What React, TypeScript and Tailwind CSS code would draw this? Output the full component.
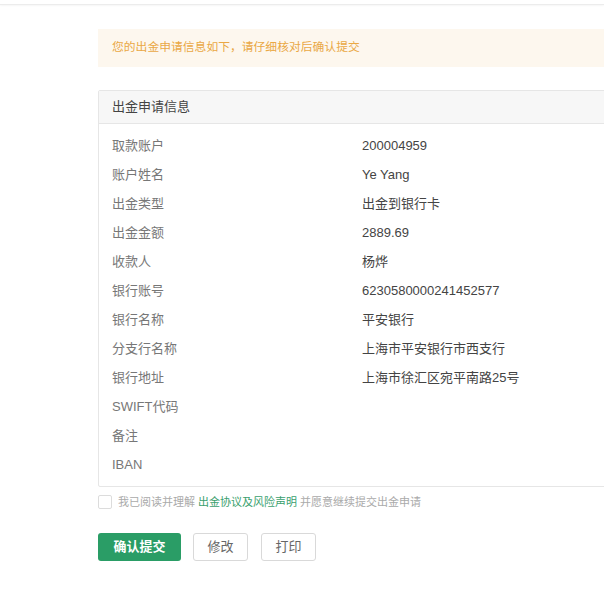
import React from "react";

const rows: [string, string][] = [
  ["取款账户", "200004959"],
  ["账户姓名", "Ye Yang"],
  ["出金类型", "出金到银行卡"],
  ["出金金额", "2889.69"],
  ["收款人", "杨烨"],
  ["银行账号", "6230580000241452577"],
  ["银行名称", "平安银行"],
  ["分支行名称", "上海市平安银行市西支行"],
  ["银行地址", "上海市徐汇区宛平南路25号"],
  ["SWIFT代码", ""],
  ["备注", ""],
  ["IBAN", ""],
];

export default function App() {
  return (
    <div
      className="w-full overflow-hidden bg-white min-h-[600px] text-[13px]"
      style={{ fontFamily: '"Liberation Sans", "Noto Sans CJK SC", sans-serif' }}
    >
      <div className="h-[5px] border-b border-[#ececec] shadow-[0_1px_2px_rgba(0,0,0,0.04)]" />
      <div className="pl-[98px] pt-[24px]">
        <div className="w-[620px] h-[38px] bg-[#fdf7ee] flex items-center pl-[14px] text-[#eaa845] text-[11.8px]">
          您的出金申请信息如下，请仔细核对后确认提交
        </div>
        <div className="mt-[23px] w-[620px] border border-[#e6e6e6] rounded-[2px]">
          <div className="h-[33px] bg-[#f7f7f7] border-b border-[#e6e6e6] flex items-center pl-[13px] text-[#444]">
            出金申请信息
          </div>
          <div className="py-[7px]">
            {rows.map(([k, v]) => (
              <div key={k} className="h-[29px] flex items-center">
                <div className="w-[263px] pl-[13px] text-[#777]">{k}</div>
                <div className="text-[#444]">{v}</div>
              </div>
            ))}
          </div>
        </div>
        <div className="mt-[7px] flex items-center h-[16px] text-[11px] text-[#aaa]">
          <span className="w-[14px] h-[14px] border border-[#dcdcdc] rounded-[2px] bg-white mr-[6px]" />
          <span>我已阅读并理解</span>
          <span className="text-[#3a9f6e] mx-[3px]">出金协议及风险声明</span>
          <span>并愿意继续提交出金申请</span>
        </div>
        <div className="mt-[23px] flex gap-[12px] pl-0">
          <button className="w-[83px] h-[28px] rounded-[3px] bg-[#2a9d66] text-white font-bold text-[13px]">
            确认提交
          </button>
          <button className="w-[55px] h-[28px] rounded-[3px] border border-[#d9d9d9] bg-white text-[#666] text-[13px]">
            修改
          </button>
          <button className="ml-[1px] w-[55px] h-[28px] rounded-[3px] border border-[#d9d9d9] bg-white text-[#666] text-[13px]">
            打印
          </button>
        </div>
      </div>
    </div>
  );
}
